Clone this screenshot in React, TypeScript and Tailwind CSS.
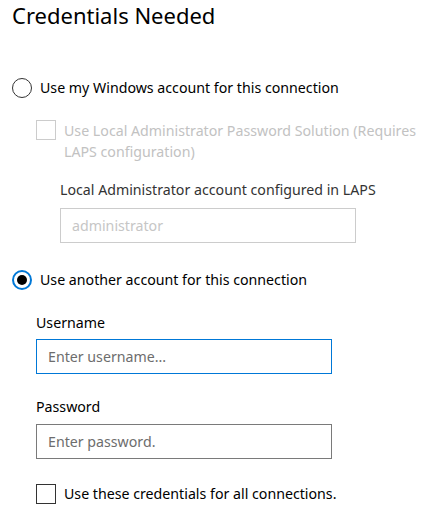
import React from "react";

const FONT = { fontFamily: '"Noto Sans", "Open Sans", sans-serif' };

function Radio({ checked, label }: { checked?: boolean; label: string }) {
  return (
    <div className="flex items-center h-[20px]">
      <div className="ml-[12px] w-[20px] h-[20px] shrink-0">
        {checked ? (
          <div className="w-[20px] h-[20px] rounded-full border-2 border-[#0078d7] flex items-center justify-center">
            <div className="w-[10px] h-[10px] rounded-full bg-black" />
          </div>
        ) : (
          <div className="w-[20px] h-[20px] rounded-full border border-[#333333]" />
        )}
      </div>
      <span className="ml-[8px] text-[14.2px] leading-[20px] text-black">{label}</span>
    </div>
  );
}

export default function App() {
  return (
    <div className="w-[433px] h-[511px] bg-white overflow-hidden" style={FONT}>
      <h1 className="pl-[12px] text-[22px] leading-[30px] font-normal text-black">Credentials Needed</h1>

      <div className="mt-[48px]">
        <Radio label="Use my Windows account for this connection" />
      </div>

      {/* LAPS (disabled) */}
      <div className="mt-[22px] ml-[36px] flex items-start">
        <div className="w-[20px] h-[20px] shrink-0 border border-[#cccccc] bg-white" />
        <p className="ml-[8px] text-[14.2px] leading-[21px] text-[#c2c2c2]">
          Use Local Administrator Password Solution (Requires LAPS configuration)
        </p>
      </div>

      <div className="mt-[18px] ml-[60px]">
        <label className="block text-[14.2px] leading-[20px] text-[#333333]">
          Local Administrator account configured in LAPS
        </label>
        <input
          disabled
          placeholder="administrator"
          className="mt-[8px] block w-[296px] h-[35px] border border-[#cccccc] bg-white px-[11px] text-[14.2px] placeholder-[#c6c6c6] outline-none"
        />
      </div>

      <div className="mt-[27px]">
        <Radio checked label="Use another account for this connection" />
      </div>

      <div className="ml-[36px]">
        <label className="mt-[23px] block text-[14.2px] leading-[20px] text-black">Username</label>
        <input
          placeholder="Enter username..."
          className="mt-[6px] block w-[296px] h-[35px] border border-[#0078d7] bg-white px-[11px] text-[14.2px] placeholder-[#6d6d6d] outline-none"
        />

        <label className="mt-[23px] block text-[14.2px] leading-[20px] text-black">Password</label>
        <input
          type="password"
          placeholder="Enter password."
          className="mt-[7px] block w-[296px] h-[35px] border border-[#7a7a7a] bg-white px-[11px] text-[14.2px] placeholder-[#6d6d6d] outline-none"
        />

        <div className="mt-[25px] flex items-center">
          <div className="w-[20px] h-[20px] shrink-0 border border-[#333333] bg-white" />
          <span className="ml-[8px] text-[14.2px] leading-[20px] text-black">
            Use these credentials for all connections.
          </span>
        </div>
      </div>
    </div>
  );
}
